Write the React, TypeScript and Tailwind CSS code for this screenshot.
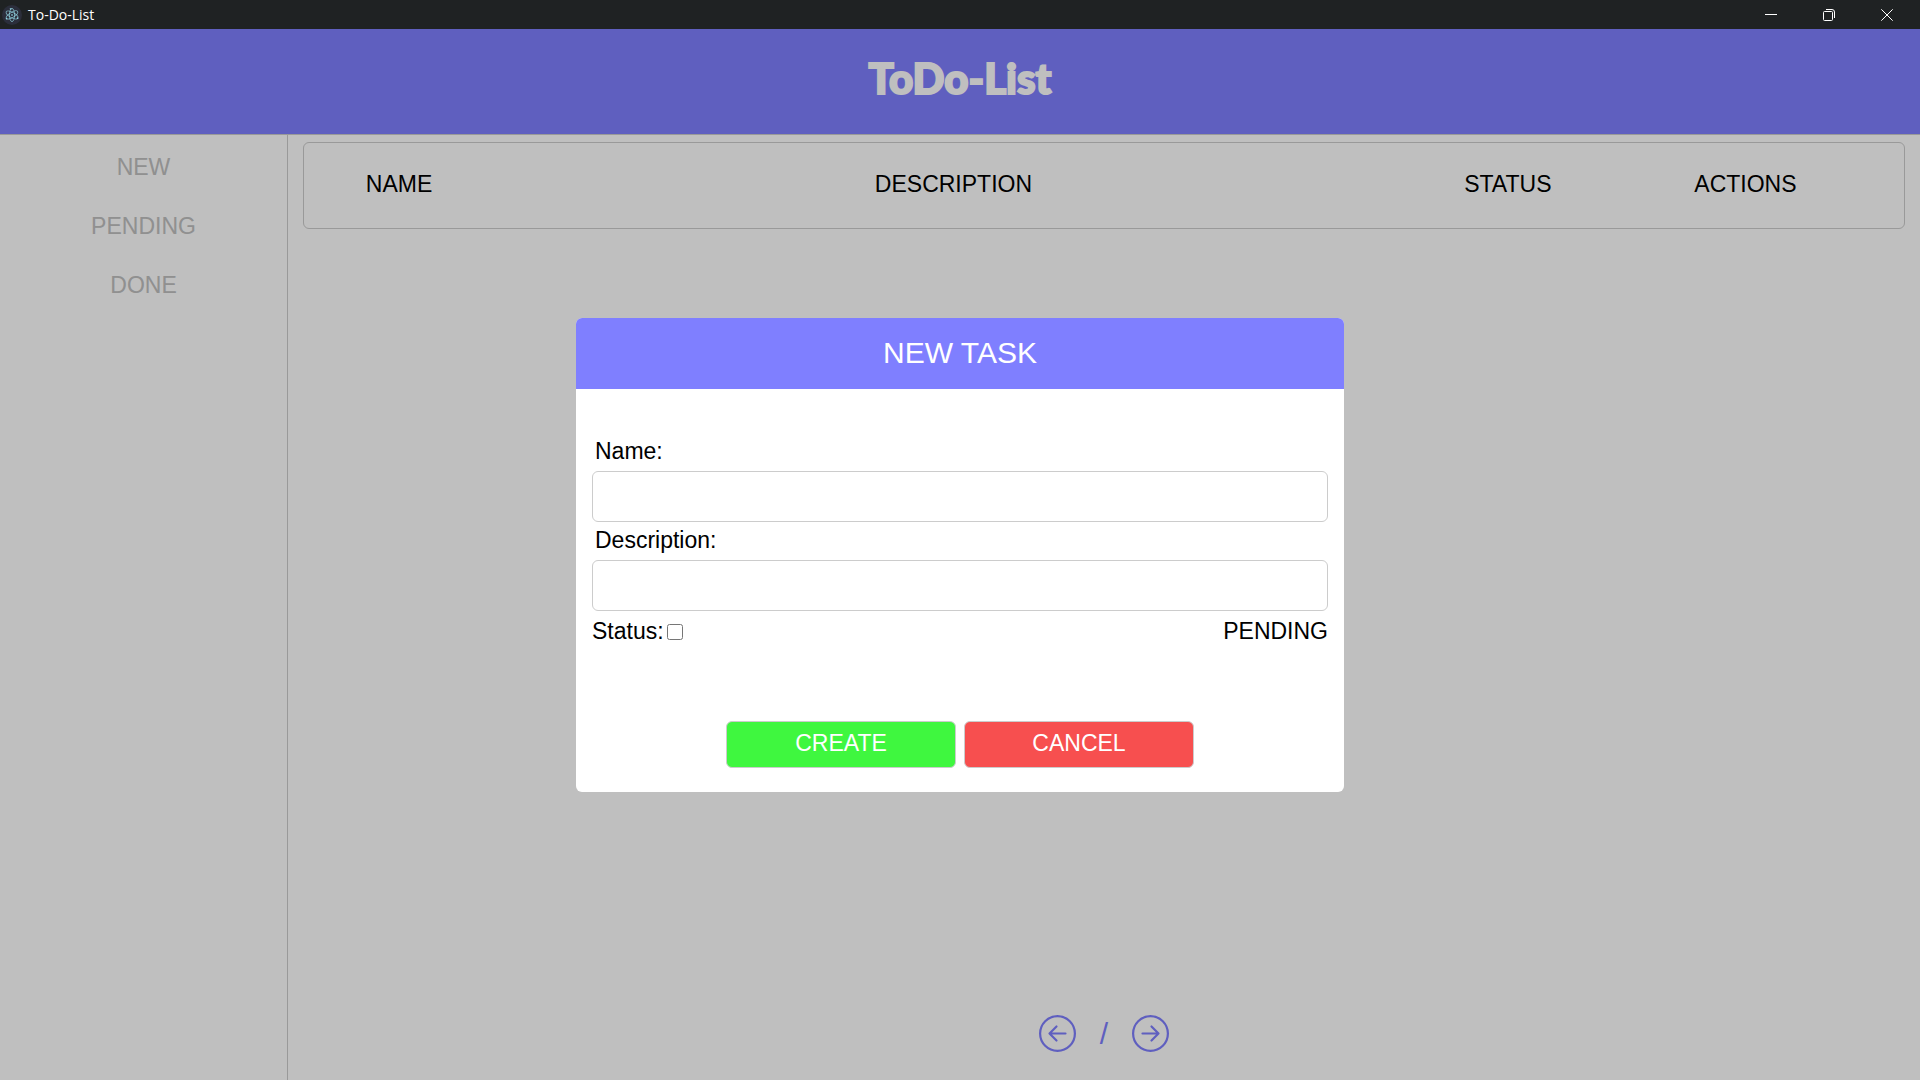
import { useState } from "react";

function ElectronIcon() {
  return (
    <svg className="size-5" viewBox="0 0 20 20" fill="none" aria-hidden="true">
      <circle cx="10" cy="10" r="10" fill="#2b2e3b" />
      <g stroke="#9feaf9" strokeOpacity="0.65" strokeWidth="0.9">
        <ellipse cx="10" cy="10" rx="6.6" ry="2.6" transform="rotate(28 10 10)" />
        <ellipse cx="10" cy="10" rx="6.6" ry="2.6" transform="rotate(-32 10 10)" />
        <ellipse cx="10" cy="10" rx="6.6" ry="2.6" transform="rotate(90 10 10)" />
      </g>
      <g fill="#9feaf9" fillOpacity="0.7">
        <circle cx="10" cy="10" r="0.9" />
        <circle cx="4.6" cy="13.6" r="0.9" />
        <circle cx="15.6" cy="13.2" r="0.9" />
        <circle cx="8.6" cy="3.8" r="0.9" />
      </g>
    </svg>
  );
}

function TitleBar() {
  const control = "flex h-full w-[58px] items-center justify-center";
  return (
    <div className="flex h-[29px] items-center justify-between bg-[#1f2223] pr-1 pl-[2px] text-white">
      <div className="flex items-center gap-[6px]">
        <ElectronIcon />
        <span className="font-['Open_Sans',sans-serif] text-[14px]">To-Do-List</span>
      </div>
      <div className="flex h-full">
        <button className={control} aria-label="Minimize">
          <svg className="size-3" viewBox="0 0 12 12" stroke="currentColor">
            <path d="M0 5.5h12" />
          </svg>
        </button>
        <button className={control} aria-label="Restore">
          <svg className="size-3" viewBox="0 0 12 12" fill="none" stroke="currentColor">
            <rect x="0.5" y="2.5" width="9" height="9" rx="1" />
            <path d="M3 0.5h6a2.5 2.5 0 0 1 2.5 2.5v6" />
          </svg>
        </button>
        <button className={control} aria-label="Close">
          <svg className="size-3" viewBox="0 0 12 12" stroke="currentColor">
            <path d="M0.3 0.3l11.4 11.4M11.7 0.3L0.3 11.7" />
          </svg>
        </button>
      </div>
    </div>
  );
}

function ArrowCircle({ flipped = false }: { flipped?: boolean }) {
  return (
    <svg
      className={flipped ? "size-[37px] -scale-x-100" : "size-[37px]"}
      viewBox="0 0 37 37"
      fill="none"
      stroke="currentColor"
      strokeWidth="2.2"
      strokeLinecap="round"
      strokeLinejoin="round"
    >
      <circle cx="18.5" cy="18.5" r="17.4" />
      <path d="M26.5 18.5H10.5M17.5 11.5l-7 7 7 7" />
    </svg>
  );
}

function TaskTable() {
  return (
    <div className="rounded-md border border-[#ccc] pr-4">
      <table className="w-full table-fixed">
        <colgroup>
          <col className="w-[12%]" />
          <col className="w-[58%]" />
          <col className="w-[12%]" />
          <col className="w-[18%]" />
        </colgroup>
        <thead>
          <tr className="h-[85px]">
            {["NAME", "DESCRIPTION", "STATUS", "ACTIONS"].map((title) => (
              <th key={title} scope="col" className="pb-[3px] text-center font-normal">
                {title}
              </th>
            ))}
          </tr>
        </thead>
      </table>
    </div>
  );
}

function NewTaskDialog() {
  const [done, setDone] = useState(false);
  const field = "h-[51px] w-full rounded-md border border-[#ccc] px-3 outline-none";
  const label = "mb-[2px] block pl-[3px] leading-9";
  const action = "h-[47px] w-[230px] rounded-md border border-[#ccc] pb-[2px] text-white";
  return (
    <form
      role="dialog"
      aria-labelledby="dialog-title"
      className="w-2/5 overflow-hidden rounded-md bg-white"
      onSubmit={(event) => event.preventDefault()}
    >
      <h2 id="dialog-title" className="bg-[#7f7fff] pb-[2px] text-center text-[30px] leading-[69px] text-white">
        NEW TASK
      </h2>
      <div className="px-4 pt-11 pb-6">
        <label htmlFor="task-name" className={label}>
          Name:
        </label>
        <input id="task-name" type="text" className={field} />
        <label htmlFor="task-description" className={label}>
          Description:
        </label>
        <input id="task-description" type="text" className={field} />
        <div className="flex items-center justify-between leading-[41px]">
          <div className="flex items-center gap-[3px]">
            <label htmlFor="task-status">Status:</label>
            <input
              id="task-status"
              type="checkbox"
              checked={done}
              onChange={(event) => setDone(event.target.checked)}
              className="mt-[2px] size-4"
            />
          </div>
          <span>{done ? "DONE" : "PENDING"}</span>
        </div>
        <div className="mt-[69px] flex justify-center gap-2">
          <button type="submit" className={`${action} bg-[#3ff73f]`}>
            CREATE
          </button>
          <button type="button" className={`${action} bg-[#f74f4f]`}>
            CANCEL
          </button>
        </div>
      </div>
    </form>
  );
}

export default function App() {
  return (
    <div className="flex min-h-screen flex-col font-['Liberation_Sans',Arial,sans-serif] text-[23px] text-black">
      <TitleBar />
      <div className="relative flex grow flex-col bg-white">
        <header className="flex h-[106px] justify-center border-b border-[#ccc] bg-[#7f7fff] pt-[18px]">
          <h1 className="font-['Lato',sans-serif] text-[42px] leading-[62px] font-black text-white [-webkit-text-stroke:2px_white] [stroke-linejoin:round]">
            ToDo-List
          </h1>
        </header>
        <div className="flex grow">
          <nav className="flex w-[15%] shrink-0 flex-col border-r border-[#ccc] pt-[3px] text-center text-[#c0c0c0]">
            {["NEW", "PENDING", "DONE"].map((item) => (
              <a key={item} href={`#${item.toLowerCase()}`} className="leading-[59px]">
                {item}
              </a>
            ))}
          </nav>
          <main className="flex min-w-0 flex-1 flex-col justify-between px-[15px] pt-[7px] pb-7">
            <TaskTable />
            <div className="flex items-center justify-center gap-6 text-[#7f7fff]">
              <button aria-label="Previous page">
                <ArrowCircle />
              </button>
              <span className="text-[30px] leading-[37px]">/</span>
              <button aria-label="Next page">
                <ArrowCircle flipped />
              </button>
            </div>
          </main>
        </div>
        <div className="absolute inset-0 flex items-center justify-center bg-black/25">
          <NewTaskDialog />
        </div>
      </div>
    </div>
  );
}
